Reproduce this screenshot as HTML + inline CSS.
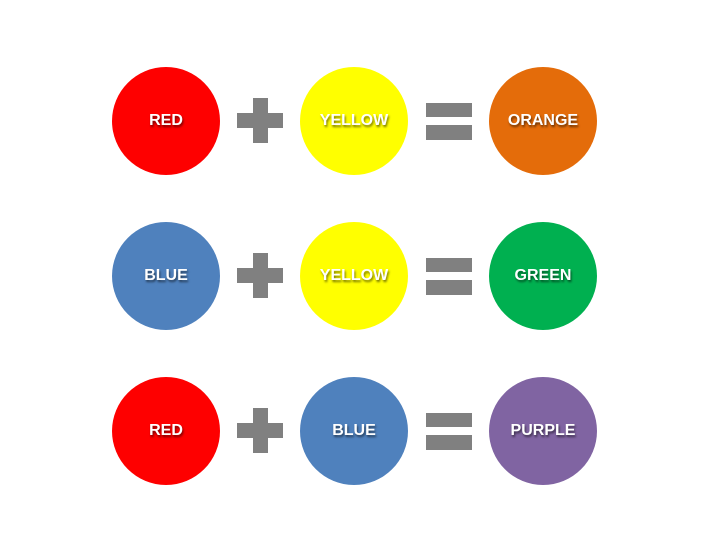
<!DOCTYPE html>
<html><head><style>
body{margin:0;width:728px;height:546px;background:#fff;position:relative;overflow:hidden;font-family:"Liberation Sans",sans-serif}
.c{position:absolute;width:108px;height:108px;border-radius:50%;display:flex;align-items:center;justify-content:center;color:#fff;font-weight:bold;font-size:16px;text-shadow:1px 2px 2px rgba(0,0,0,.55)}
.b{position:absolute;background:#808080}
</style></head><body>
<div class="c" style="left:112px;top:67px;background:#fe0000">RED</div>
<div class="c" style="left:300px;top:67px;background:#ffff00">YELLOW</div>
<div class="c" style="left:489px;top:67px;background:#e46c0a">ORANGE</div>
<div class="c" style="left:112px;top:222px;background:#4f81bd">BLUE</div>
<div class="c" style="left:300px;top:222px;background:#ffff00">YELLOW</div>
<div class="c" style="left:489px;top:222px;background:#00b050">GREEN</div>
<div class="c" style="left:112px;top:377px;background:#fe0000">RED</div>
<div class="c" style="left:300px;top:377px;background:#4f81bd">BLUE</div>
<div class="c" style="left:489px;top:377px;background:#8064a2">PURPLE</div>

<div class="b" style="left:237px;top:113px;width:46px;height:15px"></div>
<div class="b" style="left:253px;top:98px;width:15px;height:45px"></div>
<div class="b" style="left:237px;top:268px;width:46px;height:15px"></div>
<div class="b" style="left:253px;top:253px;width:15px;height:45px"></div>
<div class="b" style="left:237px;top:423px;width:46px;height:15px"></div>
<div class="b" style="left:253px;top:408px;width:15px;height:45px"></div>

<div class="b" style="left:426px;top:103px;width:46px;height:14px"></div>
<div class="b" style="left:426px;top:125px;width:46px;height:15px"></div>
<div class="b" style="left:426px;top:258px;width:46px;height:14px"></div>
<div class="b" style="left:426px;top:280px;width:46px;height:15px"></div>
<div class="b" style="left:426px;top:413px;width:46px;height:14px"></div>
<div class="b" style="left:426px;top:435px;width:46px;height:15px"></div>
</body></html>
